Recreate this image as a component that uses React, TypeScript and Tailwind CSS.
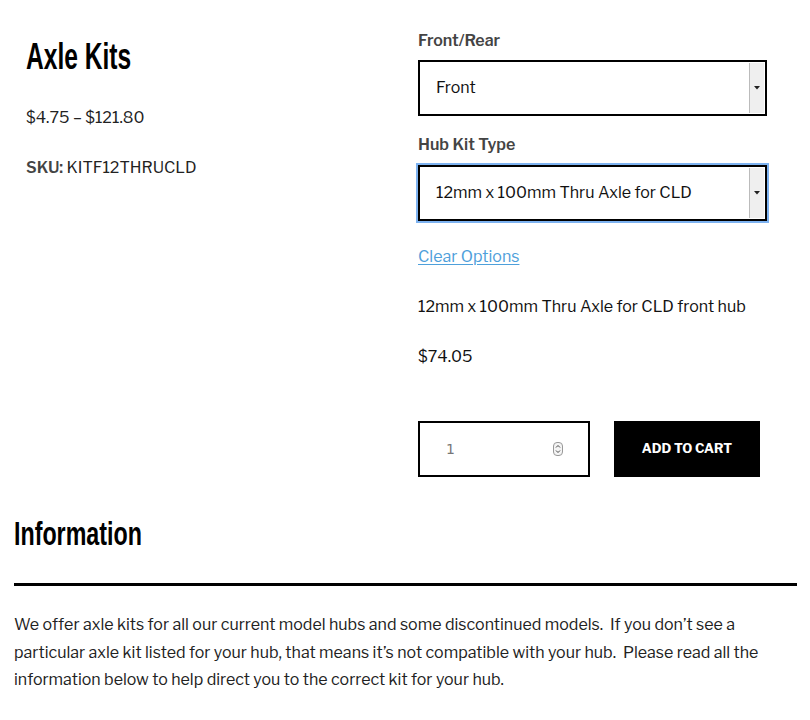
import React from "react";

const body = { fontFamily: '"Libre Franklin", "Inter", "Liberation Sans", sans-serif' };
const head = { fontFamily: '"Liberation Sans", "Arial", sans-serif' };

function Select({ value, focused }: { value: string; focused?: boolean }) {
  return (
    <div
      className={
        "flex h-[56px] w-[349px] items-stretch border-2 border-black bg-white " +
        (focused ? "outline outline-2 outline-[#7db2f0]" : "")
      }
    >
      <div className="flex flex-1 items-center pl-[16px] text-[16px] text-[#111]">{value}</div>
      <div className="my-[1px] mr-[1px] flex w-[15px] items-center justify-center border-l border-[#bbb] bg-[#efefef]">
        <svg width="6" height="4" viewBox="0 0 6 4">
          <path d="M0 0 L6 0 L3 3.5 Z" fill="#222" />
        </svg>
      </div>
    </div>
  );
}

export default function App() {
  return (
    <div className="min-h-[720px] w-[810px] bg-white text-[#222]" style={body}>
      <div className="flex">
        <div className="w-[418px] pl-[26px] pt-[37px]">
          <h1 className="h-[40px] whitespace-nowrap text-[37px] font-bold leading-[40px] text-black" style={head}>
            <span className="inline-block origin-left scale-x-[0.664]">Axle Kits</span>
          </h1>
          <p className="mt-[31px] text-[16px] leading-[20px]">$4.75 – $121.80</p>
          <p className="mt-[30px] text-[16px] leading-[20px]">
            <span className="font-semibold text-[#444]">SKU:</span> KITF12THRUCLD
          </p>
        </div>
        <div className="pt-[31px]">
          <div className="text-[16px] font-semibold leading-[20px] text-[#444]">Front/Rear</div>
          <div className="mt-[9px]">
            <Select value="Front" />
          </div>
          <div className="mt-[19px] text-[16px] font-semibold leading-[20px] text-[#444]">Hub Kit Type</div>
          <div className="mt-[10px]">
            <Select value="12mm x 100mm Thru Axle for CLD" focused />
          </div>
          <div className="mt-[26px] text-[16px] leading-[20px]">
            <a className="text-[#4ea0db] underline underline-offset-2" href="#">
              Clear Options
            </a>
          </div>
          <p className="mt-[30px] text-[16px] leading-[20px] text-[#111]">12mm x 100mm Thru Axle for CLD front hub</p>
          <p className="mt-[30px] text-[16px] leading-[20px] text-[#111]">$74.05</p>
          <div className="mt-[54px] flex gap-[24px]">
            <div className="flex h-[56px] w-[172px] items-center border-2 border-black pl-[26px] pr-[25px]">
              <span className="flex-1 text-[14px] text-[#777]" style={{ fontFamily: '"DejaVu Sans", sans-serif' }}>
                1
              </span>
              <svg width="10" height="14" viewBox="0 0 10 14">
                <rect x="0.5" y="0.5" width="9" height="13" rx="3.5" fill="#f4f4f4" stroke="#999" />
                <path d="M3 5.5 L5 3.5 L7 5.5" fill="none" stroke="#444" strokeWidth="1" />
                <path d="M3 8.5 L5 10.5 L7 8.5" fill="none" stroke="#444" strokeWidth="1" />
              </svg>
            </div>
            <button className="h-[56px] w-[146px] bg-black text-[13px] font-bold text-white">ADD TO CART</button>
          </div>
        </div>
      </div>
      <div className="px-[14px]">
        <h2 className="mt-[36px] h-[40px] whitespace-nowrap text-[34px] font-bold leading-[40px] text-black" style={head}>
          <span className="inline-block origin-left scale-x-[0.684]">Information</span>
        </h2>
        <div className="mt-[30px] h-[3px] w-[783px] bg-black" />
        <p className="mt-[25px] w-[784px] text-[16px] leading-[27.5px] text-[#222]">
          We offer axle kits for all our current model hubs and some discontinued models.&nbsp; If you don’t see a
          particular axle kit listed for your hub, that means it’s not compatible with your hub.&nbsp; Please read all
          the information below to help direct you to the correct kit for your hub.
        </p>
      </div>
    </div>
  );
}
